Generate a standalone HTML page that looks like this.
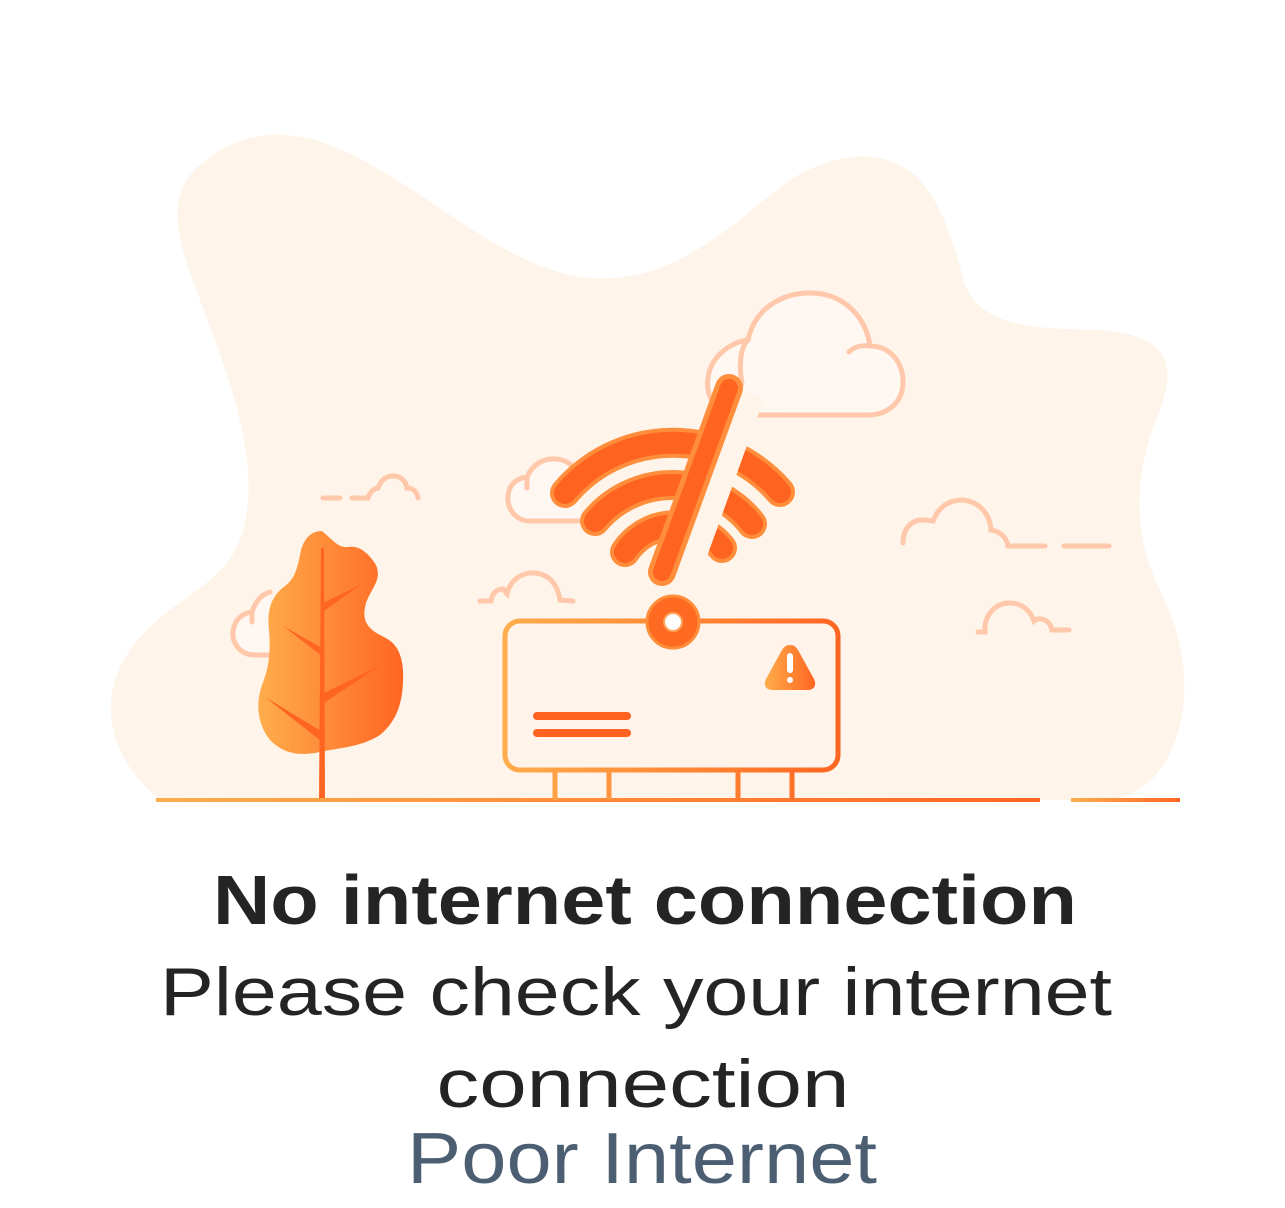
<!DOCTYPE html>
<html><head><meta charset="utf-8"><style>
html,body{margin:0;padding:0;background:#fff;width:1285px;height:1208px;overflow:hidden}
svg{display:block}
</style></head><body>
<svg width="1285" height="1208" viewBox="0 0 1285 1208" xmlns="http://www.w3.org/2000/svg">
<defs>
<linearGradient id="g1" x1="0" x2="1" y1="0" y2="0"><stop offset="0" stop-color="#ffad4c"/><stop offset="1" stop-color="#ff6522"/></linearGradient>
<linearGradient id="gl" gradientUnits="userSpaceOnUse" x1="156" x2="1040" y1="0" y2="0"><stop offset="0" stop-color="#ffad4c"/><stop offset="1" stop-color="#ff6522"/></linearGradient>
<linearGradient id="gr" gradientUnits="userSpaceOnUse" x1="503" x2="840" y1="0" y2="0"><stop offset="0" stop-color="#ffad4c"/><stop offset="1" stop-color="#ff6522"/></linearGradient>
</defs>
<path fill="#fff4e9" d="M160 800 C110 760 95 700 130 650 C165 600 220 590 240 540 C265 470 230 380 200 300 C175 235 165 195 200 165 C235 135 275 125 330 145 C420 180 500 270 590 278 C680 285 740 215 790 180 C830 155 880 145 915 175 C945 205 955 250 965 285 C985 330 1040 328 1100 330 C1160 335 1180 355 1160 410 C1135 470 1130 530 1160 590 C1190 650 1195 720 1160 770 C1140 795 1120 800 1100 800 Z"/>
<g fill="none" stroke="#ffc8ab" stroke-width="5" stroke-linecap="round">
<path fill="#fff7f1" d="M745 412 C715 412 705 385 712 365 C718 350 730 342 745 340 C755 305 785 292 810 292 C845 292 868 315 870 345 C890 345 905 362 903 382 C900 402 888 413 870 413 Z" stroke="none"/>
<path d="M742 384 C738 360 742 345 748 340 C755 308 782 293 810 293 C845 293 866 318 870 346 C890 346 903 362 903 382 C903 402 888 415 868 415 L740 415 C718 415 705 398 708 378 C710 360 725 345 746 340"/>
<path d="M849 352 C855 346 862 345 870 346"/>
<path fill="#fff7f1" d="M580 521 L530 521 C515 521 507 508 508 496 C509 484 517 478 527 477 C532 465 543 458 556 459 C570 460 578 470 580 480"/>
<path d="M527 477 L527 488"/>
<path fill="#fff7f1" d="M270 655 L255 655 C240 655 232 643 233 632 C234 620 242 613 252 612 C256 600 263 594 270 592"/>
<path d="M252 612 L252 622"/>
<path d="M323 498 L340 498 M352 498 L368 498 C370 492 373 489 378 488 C381 479 388 475 395 476 C402 477 406 482 407 488 C413 488 417 492 418 498"/>
<path d="M480 601 L491 601 C492 593 497 589 503 589 C505 591 506 593 507 594 C510 580 522 572 535 573 C549 574 558 585 560 600 L573 601"/>
<path d="M903 543 C903 528 912 519 925 520 L933 521 C938 508 948 500 962 500 C978 501 990 513 991 530 C1000 531 1007 538 1008 546 L1045 546 M1064 546 L1109 546"/>
<path d="M978 632 L985 632 C984 615 995 603 1010 603 C1023 603 1031 612 1034 621 C1040 616 1050 620 1052 630 L1069 630"/>
</g>
<path fill="url(#g1)" d="M322 531 C312 531 305 537 301 550 C298 565 296 578 285 586 C270 597 267 612 269 630 C271 655 268 670 262 685 C255 705 258 725 270 740 C285 755 300 755 315 753 C335 748 360 748 380 735 C398 720 404 700 403 670 C401 645 390 640 380 635 C365 627 362 618 366 603 C372 587 382 580 376 565 C368 552 358 545 348 547 C338 548 333 540 322 531 Z"/>
<g fill="#ff6522">
<path d="M321 548 L324 548 L325 800 L319 800 Z"/>
<path d="M323 603 L362 584 L324 611 Z"/>
<path d="M322 648 L283 626 L322 656 Z"/>
<path d="M324 693 L381 665 L324 703 Z"/>
<path d="M321 731 L265 697 L321 741 Z"/>
</g>
<rect x="156" y="798" width="884" height="4" fill="url(#gl)"/>
<rect x="1071" y="798" width="109" height="4" fill="url(#g1)"/>
<rect x="505" y="621" width="333" height="149" rx="15" fill="#fff3ea" stroke="url(#gr)" stroke-width="5"/>
<g stroke="url(#gr)" stroke-width="5" fill="none">
<path d="M555 772 V800 M609 772 V800 M738 772 V800 M792 772 V800"/>
</g>
<path d="M537 716 H627 M537 733 H627" stroke="#ff6320" stroke-width="8" stroke-linecap="round"/>
<circle cx="673" cy="622" r="26" fill="#ff6a22" stroke="#ff8d3a" stroke-width="3"/>
<circle cx="673" cy="622" r="9" fill="#fff" stroke="#ffa25a" stroke-width="2"/>
<path d="M790 645 C786 645 784 647 782 650 L766 679 C763 685 766 690 772 690 L808 690 C814 690 817 685 814 679 L798 650 C796 647 794 645 790 645 Z" fill="url(#g1)"/>
<rect x="787" y="653" width="6" height="20" rx="3" fill="#fff"/><circle cx="790" cy="680" r="3" fill="#fff"/>
<g fill="none" stroke-linecap="round">
<g stroke="#ff8e3c" stroke-width="30">
<path d="M565 493 A141 141 0 0 1 780 492"/>
<path d="M595 521 A101 101 0 0 1 752 524"/>
<path d="M625 552 A60 60 0 0 1 722 548"/>
</g>
<g stroke="#ff6320" stroke-width="22">
<path d="M565 493 A141 141 0 0 1 780 492"/>
<path d="M595 521 A101 101 0 0 1 752 524"/>
<path d="M625 552 A60 60 0 0 1 722 548"/>
</g>
<path d="M737 390 L670 576" stroke="#fff4e9" stroke-width="40" stroke-linecap="butt" transform="translate(8 2)"/>
<path d="M729 388 L662 572" stroke="#ff8e3c" stroke-width="28"/>
<path d="M729 388 L662 572" stroke="#ff6320" stroke-width="18"/>
</g>
<g font-family="'Liberation Sans', sans-serif" text-anchor="middle">
<text x="645" y="924" font-size="70" font-weight="bold" fill="#242424" textLength="864" lengthAdjust="spacingAndGlyphs">No internet connection</text>
<text x="636" y="1015" font-size="68" fill="#242424" textLength="952" lengthAdjust="spacingAndGlyphs">Please check your internet</text>
<text x="643" y="1107" font-size="68" fill="#242424" textLength="413" lengthAdjust="spacingAndGlyphs">connection</text>
<text x="642" y="1183" font-size="72" fill="#4c5f72" textLength="470" lengthAdjust="spacingAndGlyphs">Poor Internet</text>
</g>
</svg>
</body></html>
